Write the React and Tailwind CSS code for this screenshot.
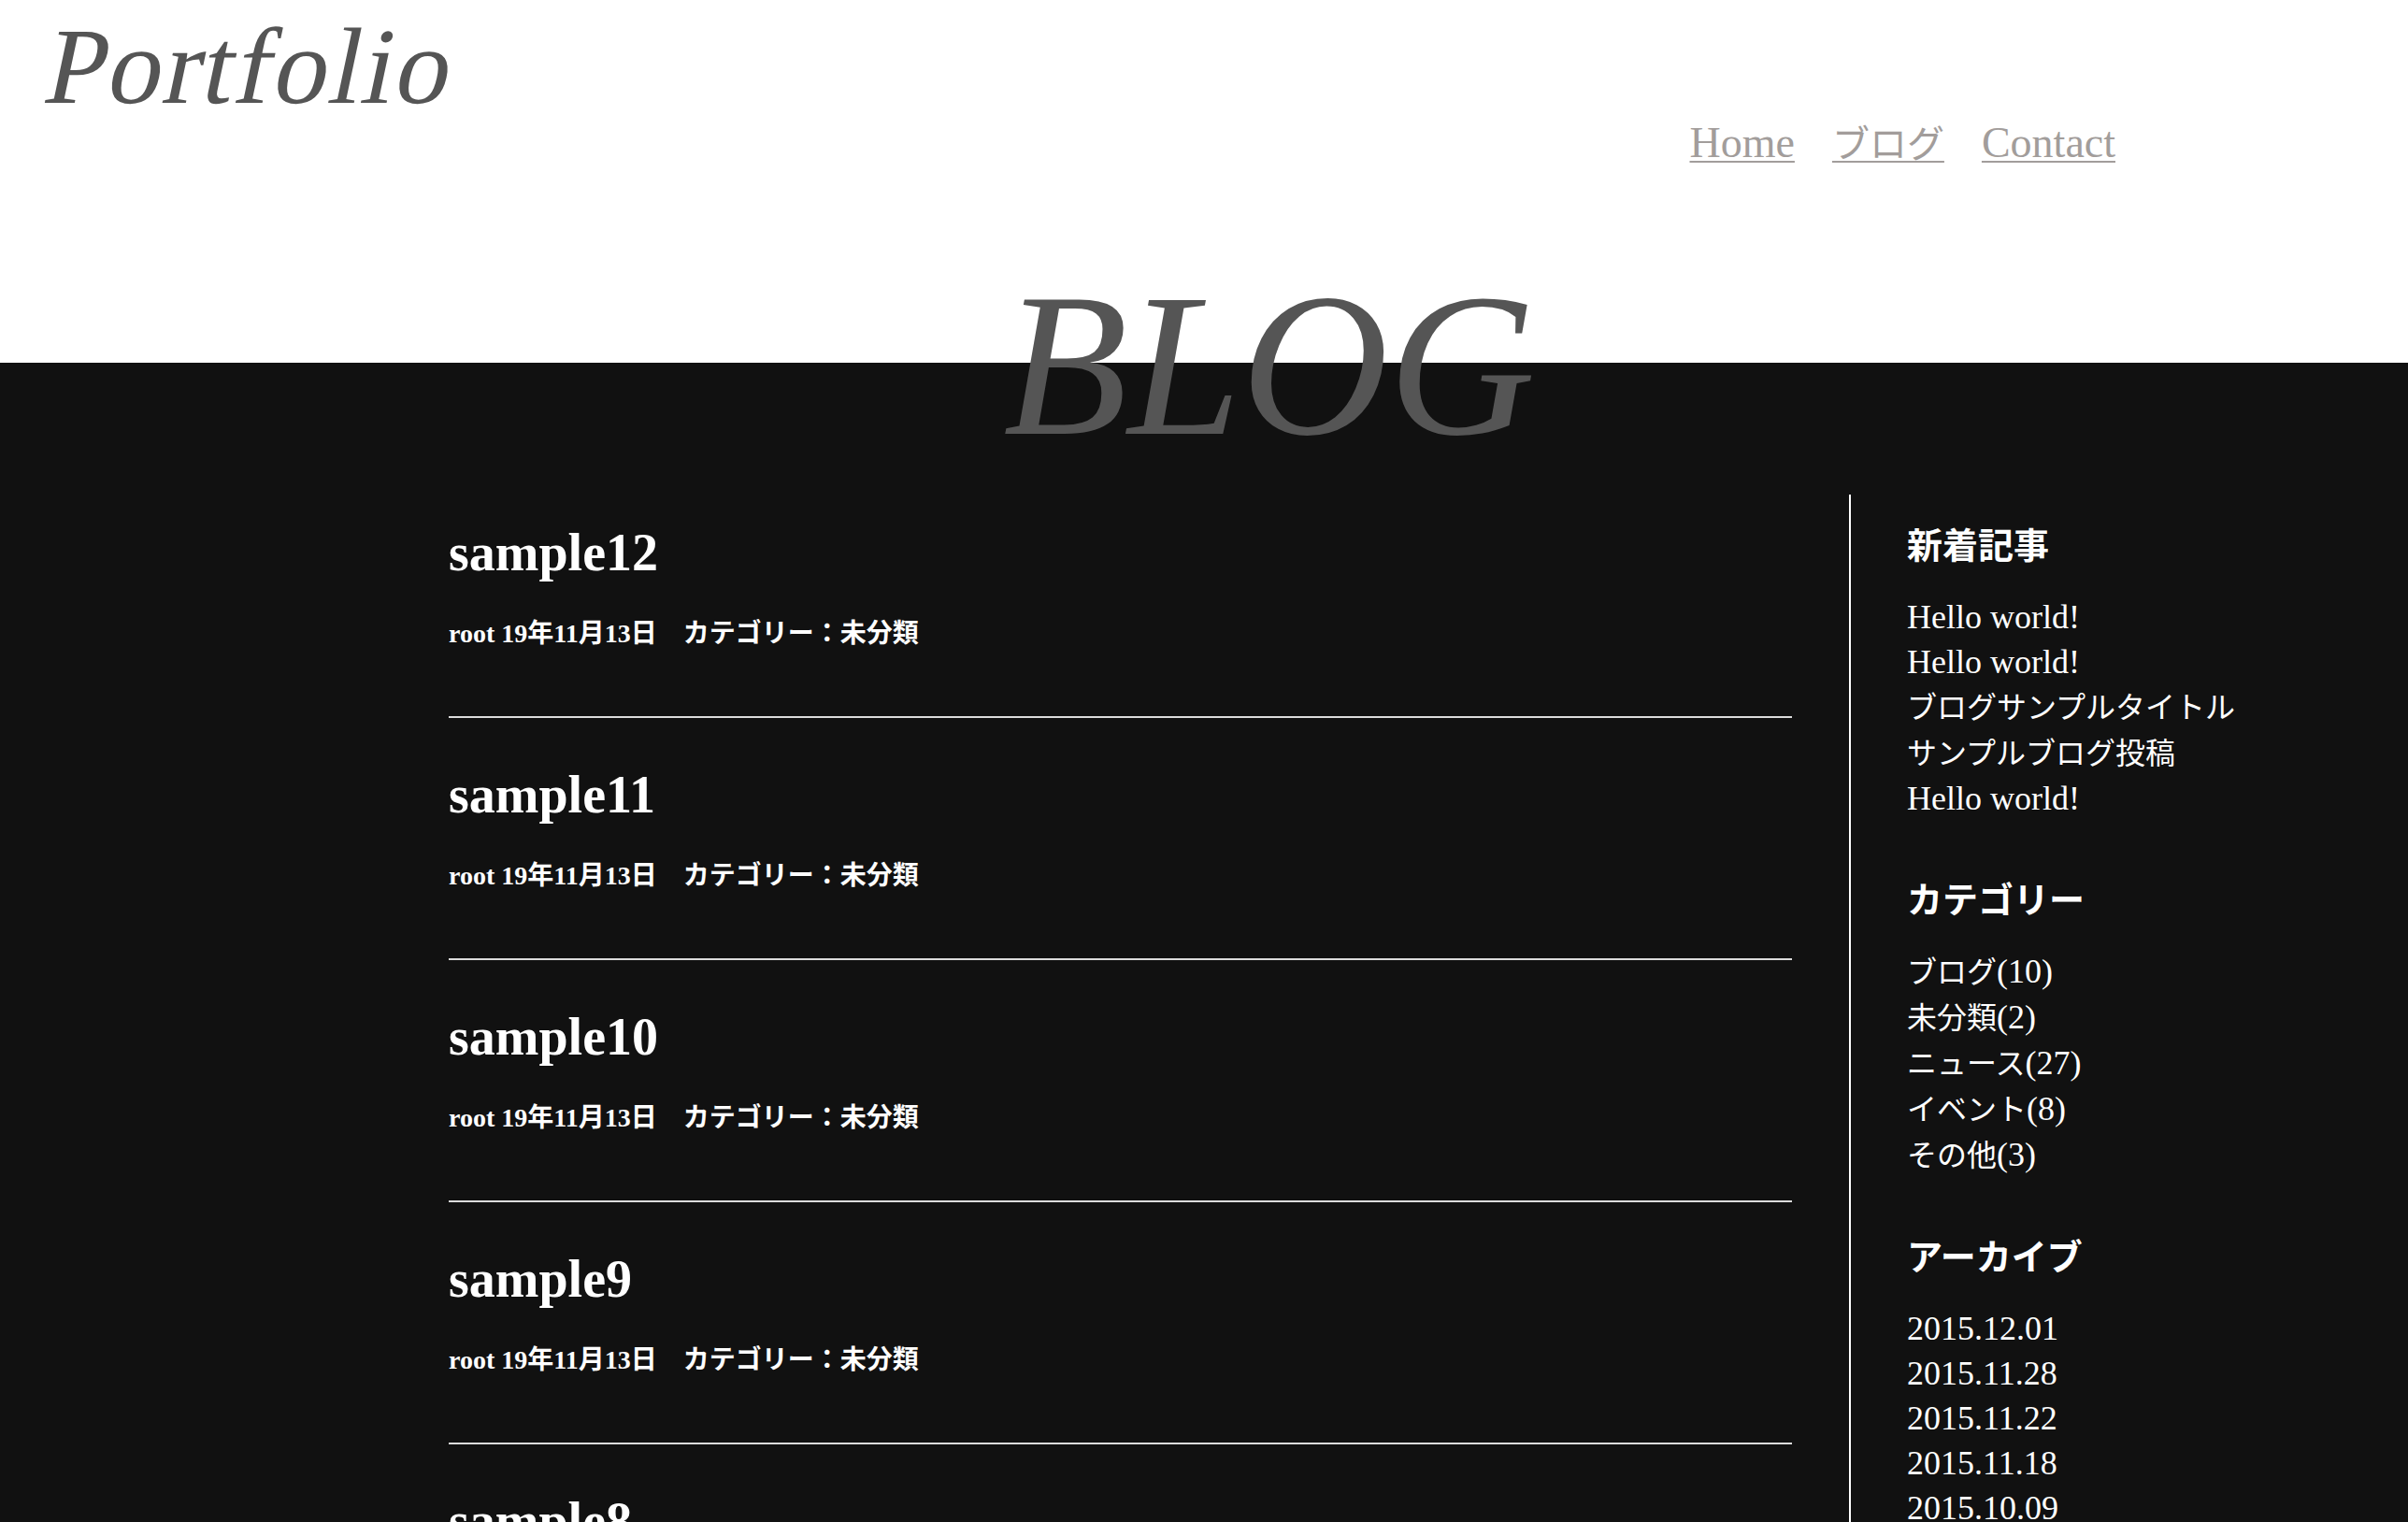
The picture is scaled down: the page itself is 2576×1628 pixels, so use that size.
import React from "react";

const posts = ["sample12", "sample11", "sample10", "sample9", "sample8", "sample7"];

const sidebar = [
  {
    title: "新着記事",
    items: ["Hello world!", "Hello world!", "ブログサンプルタイトル", "サンプルブログ投稿", "Hello world!"],
  },
  {
    title: "カテゴリー",
    items: ["ブログ(10)", "未分類(2)", "ニュース(27)", "イベント(8)", "その他(3)"],
  },
  {
    title: "アーカイブ",
    items: ["2015.12.01", "2015.11.28", "2015.11.22", "2015.11.18", "2015.10.09", "2015.09.30"],
  },
];

// japanese runs are set a bit smaller than the latin ones
const Mixed = ({ text }) => {
  const parts = text.split(/([\u3000-\u30ff\u4e00-\u9fff\uff00-\uffef]+)/).filter(Boolean);
  return parts.map((p, i) =>
    /[\u3000-\u30ff\u4e00-\u9fff\uff00-\uffef]/.test(p) ? (
      <span key={i} className="text-[32px]">{p}</span>
    ) : (
      <span key={i}>{p}</span>
    )
  );
};

const App = () => {
  return (
    <div className="min-h-screen bg-[#111] font-['Liberation_Serif','Noto_Sans_CJK_JP',serif]">
      {/* Header */}
      <header className="flex h-[388px] bg-white">
        <h1 className="ml-[52px] mt-[13px] h-fit -skew-x-12 text-[116px] leading-none tracking-[2.5px] text-[#555]">
          Portfolio
        </h1>
        <nav className="ml-auto mr-[313px] mt-[130px] flex items-baseline gap-[40px] text-[46px] leading-none text-[#a29d9b]">
          <a href="#" className="underline decoration-2 underline-offset-[4px]">Home</a>
          <a href="#" className="text-[40px] underline decoration-2 underline-offset-[4px]">ブログ</a>
          <a href="#" className="underline decoration-2 underline-offset-[4px]">Contact</a>
        </nav>
      </header>

      {/* Blog */}
      <section className="flex flex-col bg-[#111] text-white">
        <h2 className="-mt-[106px] pl-[140px] text-center text-[218px] leading-none italic text-[#555]">
          BLOG
        </h2>

        <div className="mt-[9px] flex">
          <main className="ml-[480px] w-[1437px]">
            {posts.map((p) => (
              <article key={p} className="border-b-2 border-[#dcdcdc] pt-[54px] pb-[74px]">
                <h3 className="text-[56px] font-bold leading-none">{p}</h3>
                <p className="mt-[45px] text-[28px] font-bold leading-none">
                  root 19年11月13日　カテゴリー：未分類
                </p>
              </article>
            ))}
          </main>

          <aside className="ml-[61px] mt-[20px] w-[520px] border-l-2 border-white pl-[60px] pt-[36px]">
            {sidebar.map((s, i) => (
              <div key={s.title} className={i > 0 ? "mt-[66px]" : ""}>
                <h4 className="text-[38px] font-bold leading-none">{s.title}</h4>
                <ul className="mt-[33px] text-[36px] leading-[48px]">
                  {s.items.map((it, j) => (
                    <li key={j}>
                      <a href="#"><Mixed text={it} /></a>
                    </li>
                  ))}
                </ul>
              </div>
            ))}
          </aside>
        </div>
      </section>
    </div>
  );
};

export default App;
